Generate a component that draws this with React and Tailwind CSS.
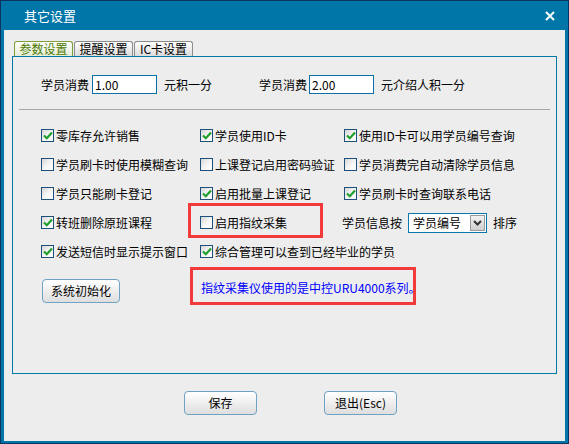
const FONT = { fontFamily: '"Noto Sans CJK SC", "Liberation Sans", sans-serif' };

function Check({ checked }) {
  return (
    <span className="flex h-[13px] w-[13px] shrink-0 items-center justify-center border border-[#1d4f7c] bg-gradient-to-br from-[#d6d6d6] via-[#f4f4f4] to-white">
      {checked && (
        <svg width="10" height="9" viewBox="0 0 10 9">
          <path d="M1 4.5 L3.8 7.2 L9 1.5" fill="none" stroke="#1f9e2b" strokeWidth="2.2" />
        </svg>
      )}
    </span>
  );
}

function Opt({ checked, label }) {
  return (
    <label className="flex items-center gap-[2px] whitespace-nowrap text-[12px] leading-none text-black">
      <Check checked={checked} />
      <span>{label}</span>
    </label>
  );
}

function Btn({ children, className }) {
  return (
    <button
      className={`flex h-[24px] items-center justify-center rounded-[4px] border border-[#6fa3c6] bg-gradient-to-b from-white to-[#dedede] text-[12px] leading-none text-black ${className}`}
    >
      {children}
    </button>
  );
}

function Tab({ label, active }) {
  return (
    <div
      className={`flex h-[15px] w-[59px] items-center justify-center rounded-t-[3px] border border-b-0 text-[12px] leading-none ${
        active
          ? "border-[#7d9c3a] bg-gradient-to-b from-white to-[#e4ecd4] text-[#4d7a00]"
          : "border-[#8c8c8c] bg-gradient-to-b from-white to-[#dcdcdc] text-black"
      }`}
    >
      {label}
    </div>
  );
}

export default function App() {
  return (
    <div className="h-[444px] w-[569px] bg-[#0b3463] p-px" style={FONT}>
      <div className="flex h-full flex-col bg-[#0076a8] px-[3px] pb-[2px]">
        {/* title bar */}
        <div className="flex h-[29px] shrink-0 items-center justify-between pl-[20px] pr-[10px]">
          <span className="text-[13px] leading-none text-white">其它设置</span>
          <svg width="10" height="10" viewBox="0 0 10 10">
            <path d="M1 1 L9 9 M9 1 L1 9" stroke="white" strokeWidth="2" />
          </svg>
        </div>

        <div className="flex flex-1 flex-col bg-[#ededed] px-[8px] pt-[11px]">
          <div className="flex gap-px pl-[2px]">
            <Tab label="参数设置" active />
            <Tab label="提醒设置" />
            <Tab label="IC卡设置" />
          </div>

          <div className="relative flex h-[318px] flex-col border border-[#0078a8]">
            {/* consumption row */}
            <div className="mt-[18px] flex h-[19px] items-center pl-[28px] text-[12px] leading-none text-black">
              <span>学员消费</span>
              <div className="ml-[3px] flex h-[19px] w-[65px] items-center border border-[#0a70a8] bg-white pl-[2px]">1.00</div>
              <span className="ml-[7px]">元积一分</span>
              <span className="ml-[47px]">学员消费</span>
              <div className="ml-[2px] flex h-[19px] w-[65px] items-center border border-[#0a70a8] bg-white pl-[2px]">2.00</div>
              <span className="ml-[7px]">元介绍人积一分</span>
            </div>

            <div className="mx-[6px] mt-[15px] border-t border-[#a8a8a0]" />

            <div className="mt-[11px] grid grid-cols-[159px_144px_1fr] pl-[28px]">
              <div className="flex h-[29px] items-center"><Opt checked label="零库存允许销售" /></div>
              <div className="flex h-[29px] items-center"><Opt checked label="学员使用ID卡" /></div>
              <div className="flex h-[29px] items-center"><Opt checked label="使用ID卡可以用学员编号查询" /></div>

              <div className="flex h-[29px] items-center"><Opt label="学员刷卡时使用模糊查询" /></div>
              <div className="flex h-[29px] items-center"><Opt label="上课登记启用密码验证" /></div>
              <div className="flex h-[29px] items-center"><Opt label="学员消费完自动清除学员信息" /></div>

              <div className="flex h-[29px] items-center"><Opt label="学员只能刷卡登记" /></div>
              <div className="flex h-[29px] items-center"><Opt checked label="启用批量上课登记" /></div>
              <div className="flex h-[29px] items-center"><Opt checked label="学员刷卡时查询联系电话" /></div>

              <div className="flex h-[29px] items-center"><Opt checked label="转班删除原班课程" /></div>
              <div className="flex h-[29px] items-center"><Opt label="启用指纹采集" /></div>
              <div className="flex h-[29px] items-center text-[12px] leading-none text-black">
                <span className="-ml-[2px]">学员信息按</span>
                <div className="ml-[6px] flex h-[20px] w-[79px] items-center border border-[#0a78ac] bg-white p-px">
                  <span className="flex-1 pl-[3px]">学员编号</span>
                  <span className="flex h-[16px] w-[15px] items-center justify-center border border-[#9a9a9a] bg-gradient-to-b from-[#f2f2f2] to-[#cfcfcf]">
                    <svg width="9" height="6" viewBox="0 0 9 6">
                      <path d="M1 1 L4.5 4.5 L8 1" fill="none" stroke="#333" strokeWidth="2" />
                    </svg>
                  </span>
                </div>
                <span className="ml-[6px]">排序</span>
              </div>

              <div className="flex h-[29px] items-center"><Opt checked label="发送短信时显示提示窗口" /></div>
              <div className="col-span-2 flex h-[29px] items-center"><Opt checked label="综合管理可以查到已经毕业的学员" /></div>
            </div>

            <div className="mt-[13px] flex items-start pl-[29px]">
              <Btn className="w-[78px]">系统初始化</Btn>
              <span className="ml-[81px] mt-[-1px] text-[12px] leading-[20px] text-[#0000ff]">指纹采集仪使用的是中控URU4000系列。</span>
            </div>

            {/* red annotation boxes */}
            <div className="absolute left-[175px] top-[146px] h-[35px] w-[135px] border-[3px] border-[#f23a3a]" />
            <div className="absolute left-[177px] top-[210px] h-[38px] w-[226px] border-[3px] border-[#f23a3a]" />
          </div>

          <div className="mt-[17px] flex pl-[172px]">
            <Btn className="w-[73px]">保存</Btn>
            <Btn className="ml-[67px] w-[73px]">退出(Esc)</Btn>
          </div>
        </div>
      </div>
    </div>
  );
}
